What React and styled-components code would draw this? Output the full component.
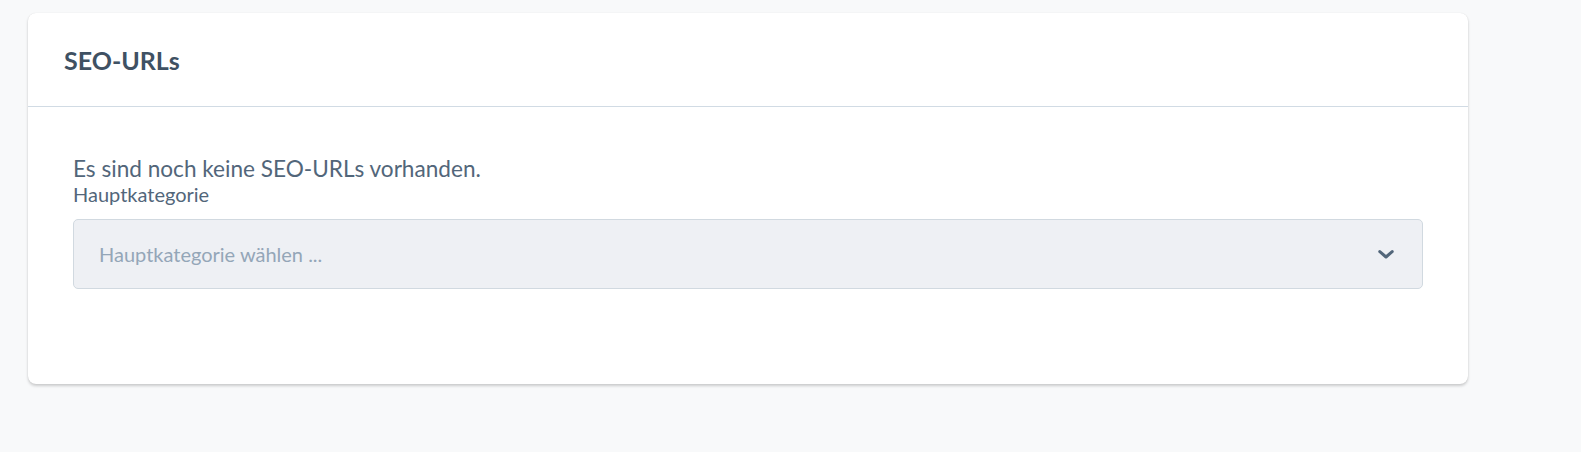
import styled, { createGlobalStyle } from "styled-components";

const GlobalStyle = createGlobalStyle`
  body {
    margin: 0;
    background: #f8f9fa;
    font-family: Lato, "Liberation Sans", sans-serif;
  }
`;

export default function App() {
  return (
    <>
      <GlobalStyle />
      <Page>
        <Card>
          <CardHeader>
            <CardTitle>SEO-URLs</CardTitle>
          </CardHeader>
          <CardBody>
            <EmptyText>Es sind noch keine SEO-URLs vorhanden.</EmptyText>
            <Label>Hauptkategorie</Label>
            <Select>
              <Placeholder>Hauptkategorie wählen ...</Placeholder>
              <Chevron viewBox="0 0 16 9" width="16" height="9">
                <path
                  d="M1.8 1.6 L8 7 L14.2 1.6"
                  fill="none"
                  stroke="#52667a"
                  strokeWidth="3"
                  strokeLinecap="round"
                  strokeLinejoin="round"
                />
              </Chevron>
            </Select>
          </CardBody>
        </Card>
      </Page>
    </>
  );
}

const Page = styled.div`
  padding: 13px 0 0 28px;
  height: 452px;
  box-sizing: border-box;
`;

const Card = styled.section`
  width: 1440px;
  background: #fff;
  border-radius: 8px;
  box-shadow: 0 2px 3px rgba(0, 0, 0, 0.18), 0 0 1px rgba(0, 0, 0, 0.12);
`;

const CardHeader = styled.header`
  height: 93px;
  padding: 0 36px;
  display: flex;
  align-items: center;
  border-bottom: 1px solid #d1dbe4;
`;

const CardTitle = styled.h2`
  margin: 0;
  font-size: 25px;
  font-weight: 700;
  color: #3f5163;
`;

const CardBody = styled.div`
  padding: 49px 45px 95px;
`;

const EmptyText = styled.p`
  margin: 0;
  font-size: 22.6px;
  line-height: 26px;
  color: #52667a;
`;

const Label = styled.div`
  font-size: 20px;
  line-height: 24px;
  color: #52667a;
  margin-bottom: 13px;
`;

const Select = styled.div`
  height: 68px;
  display: flex;
  align-items: center;
  justify-content: space-between;
  padding: 0 28px 0 25px;
  background: #eef0f4;
  border: 1px solid #d1d9e0;
  border-radius: 5px;
`;

const Placeholder = styled.span`
  font-size: 20px;
  color: #94a6b8;
`;

const Chevron = styled.svg`
  display: block;
`;
